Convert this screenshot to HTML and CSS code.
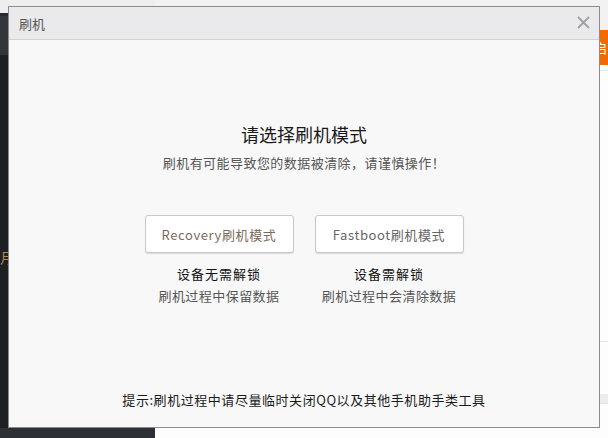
FILE: index.html
```html
<!DOCTYPE html>
<html lang="zh-CN">
<head>
<meta charset="utf-8">
<title>刷机</title>
<link rel="stylesheet" href="styles.css">
</head>
<body>
<div class="app">
  <aside class="sidebar">
    <div class="sb-top"></div>
    <div class="sb-head"></div>
    <div class="sb-body"><span class="sb-item">月</span></div>
    <div class="sb-foot"></div>
  </aside>
  <main class="main">
    <div class="main-top"></div>
    <div class="main-bar"><span class="orange-btn">启</span></div>
    <div class="main-list">
      <div class="row"></div>
      <div class="row row-grey"></div>
    </div>
  </main>
</div>

<div class="modal">
  <div class="modal-header">
    <span class="modal-title">刷机</span>
    <svg class="close" width="13" height="13" viewBox="0 0 13 13"><path d="M1 1L12 12M12 1L1 12" stroke="#a0a0a0" stroke-width="1.8" fill="none"/></svg>
  </div>
  <div class="modal-body">
    <h2 class="heading">请选择刷机模式</h2>
    <p class="warn">刷机有可能导致您的数据被清除，请谨慎操作！</p>
    <div class="options">
      <div class="option">
        <button class="mode-btn mode-rec">Recovery刷机模式</button>
        <div class="opt-title">设备无需解锁</div>
        <div class="opt-desc">刷机过程中保留数据</div>
      </div>
      <div class="option">
        <button class="mode-btn">Fastboot刷机模式</button>
        <div class="opt-title">设备需解锁</div>
        <div class="opt-desc">刷机过程中会清除数据</div>
      </div>
    </div>
    <p class="tip">提示:刷机过程中请尽量临时关闭QQ以及其他手机助手类工具</p>
  </div>
</div>
</body>
</html>
```

FILE: styles.css
```css
html, body {
  margin: 0;
  padding: 0;
  width: 608px;
  height: 438px;
  overflow: hidden;
  font-family: "Microsoft YaHei", "Noto Sans CJK SC", "Noto Sans", sans-serif;
}

.app {
  display: flex;
  width: 608px;
  height: 438px;
  background: #ffffff;
}

.sidebar {
  width: 155px;
  display: flex;
  flex-direction: column;
  background: #1e2024;
}
.sb-top { height: 13px; background: #eeeeee; }
.sb-head { height: 42px; background: #33373c; border-top: 3px solid #262a2e; box-sizing: border-box; }
.sb-body { flex: 1; position: relative; }
.sb-item {
  position: absolute;
  left: 0;
  top: 194px;
  color: #b08a55;
  font-size: 14px;
  line-height: 16px;
}
.sb-foot { height: 10px; background: #2d3035; }

.main {
  flex: 1;
  display: flex;
  flex-direction: column;
  background: #fdfdfd;
}
.main-top { height: 30px; background: #f2f2f2; }
.main-bar {
  height: 40px;
  display: flex;
  justify-content: flex-end;
  align-items: flex-start;
  border-bottom: 1px solid #e6e6e6;
}
.orange-btn {
  height: 35px;
  width: 20px;
  line-height: 35px;
  box-sizing: border-box;
  padding-left: 6px;
  background: #f56a00;
  color: #fff;
  font-size: 13px;
  overflow: hidden;
}
.main-list { flex: 1; display: flex; flex-direction: column; }
.row { height: 270px; border-bottom: 1px solid #e3e3e3; }
.row-grey { height: 9px; background: #ececec; margin-top: 52px; }

.modal {
  position: absolute;
  left: 8px;
  top: 6px;
  width: 592px;
  height: 422px;
  box-sizing: border-box;
  border: 1px solid #8c8c8c;
  background: #f8f8f8;
  display: flex;
  flex-direction: column;
}

.modal-header {
  height: 33px;
  box-sizing: border-box;
  border-bottom: 1px solid #d2d2d2;
  background: #eaeaec;
  display: flex;
  align-items: center;
  justify-content: space-between;
  padding: 0 9px 0 10px;
}
.modal-title { font-size: 13px; color: #555; }
.close { display: block; margin-top: -1px; }

.modal-body {
  flex: 1;
  display: flex;
  flex-direction: column;
  align-items: center;
  padding-top: 82px;
}

.heading {
  margin: 0;
  font-size: 18px;
  line-height: 24px;
  font-weight: normal;
  color: #1a1a1a;
}
.warn {
  margin: 7px 0 0;
  font-size: 13px;
  line-height: 20px;
  letter-spacing: 0.45px;
  color: #555;
}

.options {
  display: flex;
  gap: 21px;
  margin-top: 42px;
}
.option {
  width: 149px;
  display: flex;
  flex-direction: column;
  align-items: center;
}
.mode-btn {
  width: 149px;
  height: 38px;
  box-sizing: border-box;
  border: 1px solid #c9c9c9;
  border-radius: 3px;
  background: #ffffff;
  box-shadow: 0 1px 1px rgba(0,0,0,0.12);
  font-family: inherit;
  font-size: 13px;
  letter-spacing: 0.6px;
  color: #666;
  padding: 0;
}
.mode-rec { color: #7d6a58; }
.opt-title {
  margin-top: 11px;
  font-size: 13px;
  line-height: 20px;
  letter-spacing: 1px;
  color: #111;
}
.opt-desc {
  margin-top: 2px;
  font-size: 13px;
  line-height: 20px;
  letter-spacing: 0.45px;
  color: #555;
}

.tip {
  margin: auto 0 17px;
  font-size: 13px;
  line-height: 20px;
  letter-spacing: 0.55px;
  color: #1a1a1a;
}
```
